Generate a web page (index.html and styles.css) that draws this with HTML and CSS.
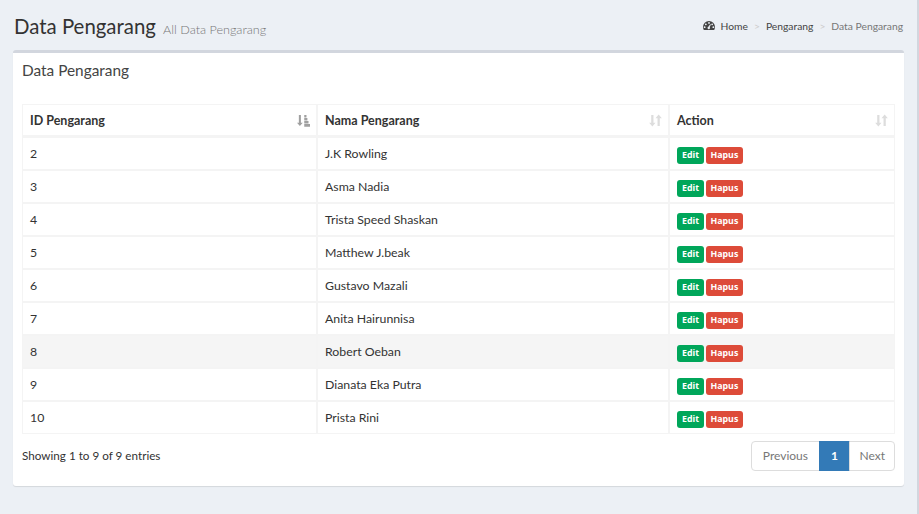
FILE: index.html
```html
<!DOCTYPE html>
<html lang="id">
  <head>
    <meta charset="UTF-8" />
    <meta name="viewport" content="width=device-width, initial-scale=1.0" />
    <title>Data Pengarang</title>
    <link rel="stylesheet" href="styles.css">
  </head>
  <body>
    <div class="content-wrapper">
      <header class="content-header">
        <h1>Data Pengarang <small>All Data Pengarang</small></h1>
        <ol class="breadcrumb">
          <li>
            <svg class="icon-dashboard" viewBox="0 0 16 12" aria-hidden="true">
              <path fill-rule="evenodd" d="M8 0a8 8 0 0 1 8 8c0 1.500-.4 2.800-1.100 4H1.100A8 8 0 0 1 0 8a8 8 0 0 1 8-8zM8 1.400a1.200 1.200 0 1 0 0 2.400 1.200 1.200 0 0 0 0-2.400zM3.800 3.200a1.200 1.200 0 1 0 0 2.400 1.200 1.200 0 0 0 0-2.400zM12.200 3.200a1.200 1.200 0 1 0 0 2.400 1.200 1.200 0 0 0 0-2.400zM2.200 7a1.200 1.200 0 1 0 0 2.400 1.200 1.200 0 0 0 0-2.400zM13.800 7a1.200 1.200 0 1 0 0 2.400 1.200 1.200 0 0 0 0-2.400zM9.600 4.200 7.100 7.600a1.700 1.700 0 1 0 1.900.5l1.600-3.500z"/>
            </svg>
            <a href="#">Home</a>
          </li>
          <li><a href="#">Pengarang</a></li>
          <li class="active">Data Pengarang</li>
        </ol>
      </header>

      <section class="box">
        <h3 class="box-title">Data Pengarang</h3>

        <table class="data-table">
          <thead>
            <tr>
              <th class="col-id">
                <div class="th-inner">ID Pengarang
                  <svg class="sort-icon sort-active" viewBox="0 0 14 14" aria-hidden="true">
                    <path d="M2 1h2.200v8.300H6.200L3.100 13 0 9.300h2zM7.800 1h2.400v2.700H7.800zM7.800 4.300h3.400V7H7.800zM7.800 7.600h4.600v2.700H7.800zM7.800 10.900H14v2.700H7.800z"/>
                  </svg>
                </div>
              </th>
              <th class="col-name">
                <div class="th-inner">Nama Pengarang
                  <svg class="sort-icon" viewBox="0 0 14 14" aria-hidden="true">
                    <path d="M2.400 1h2.400v8.400H7L3.600 13.500.2 9.400h2.200zM10.400 .5l3.400 4.100h-2.200V13H9.200V4.600H7z"/>
                  </svg>
                </div>
              </th>
              <th class="col-action">
                <div class="th-inner">Action
                  <svg class="sort-icon" viewBox="0 0 14 14" aria-hidden="true">
                    <path d="M2.400 1h2.400v8.400H7L3.600 13.500.2 9.400h2.200zM10.400 .5l3.400 4.100h-2.200V13H9.200V4.600H7z"/>
                  </svg>
                </div>
              </th>
            </tr>
          </thead>
          <tbody>
            <tr><td>2</td><td>J.K Rowling</td><td><div class="actions"><a class="btn btn-edit" href="#">Edit</a><a class="btn btn-hapus" href="#">Hapus</a></div></td></tr>
            <tr><td>3</td><td>Asma Nadia</td><td><div class="actions"><a class="btn btn-edit" href="#">Edit</a><a class="btn btn-hapus" href="#">Hapus</a></div></td></tr>
            <tr><td>4</td><td>Trista Speed Shaskan</td><td><div class="actions"><a class="btn btn-edit" href="#">Edit</a><a class="btn btn-hapus" href="#">Hapus</a></div></td></tr>
            <tr><td>5</td><td>Matthew J.beak</td><td><div class="actions"><a class="btn btn-edit" href="#">Edit</a><a class="btn btn-hapus" href="#">Hapus</a></div></td></tr>
            <tr><td>6</td><td>Gustavo Mazali</td><td><div class="actions"><a class="btn btn-edit" href="#">Edit</a><a class="btn btn-hapus" href="#">Hapus</a></div></td></tr>
            <tr><td>7</td><td>Anita Hairunnisa</td><td><div class="actions"><a class="btn btn-edit" href="#">Edit</a><a class="btn btn-hapus" href="#">Hapus</a></div></td></tr>
            <tr class="row-hover"><td>8</td><td>Robert Oeban</td><td><div class="actions"><a class="btn btn-edit" href="#">Edit</a><a class="btn btn-hapus" href="#">Hapus</a></div></td></tr>
            <tr><td>9</td><td>Dianata Eka Putra</td><td><div class="actions"><a class="btn btn-edit" href="#">Edit</a><a class="btn btn-hapus" href="#">Hapus</a></div></td></tr>
            <tr><td>10</td><td>Prista Rini</td><td><div class="actions"><a class="btn btn-edit" href="#">Edit</a><a class="btn btn-hapus" href="#">Hapus</a></div></td></tr>
          </tbody>
        </table>

        <div class="table-footer">
          <div class="table-info">Showing 1 to 9 of 9 entries</div>
          <ul class="pagination">
            <li class="page-prev"><a href="#">Previous</a></li>
            <li class="active"><a href="#">1</a></li>
            <li class="page-next"><a href="#">Next</a></li>
          </ul>
        </div>
      </section>
    </div>
  </body>
</html>
```

FILE: styles.css
```css
* {
  box-sizing: border-box;
}

html,
body {
  height: 100%;
}

body {
  margin: 0;
  background-color: #ecf0f5;
  color: #333333;
  font-family: "Lato", sans-serif;
  font-size: 12.3px;
  overflow: hidden;
}

a {
  text-decoration: none;
  color: inherit;
}

.content-wrapper {
  height: 100%;
  padding-right: 2px;
  border-right: 2px solid #d2d6de;
}

.content-header {
  display: flex;
  justify-content: space-between;
  align-items: center;
  height: 50px;
  padding: 2px 12px 0 14px;
}

.content-header h1 {
  margin: 0;
  font-size: 20.4px;
  font-weight: 400;
  color: #333333;
}

.content-header small {
  margin-left: 2px;
  font-size: 12.6px;
  font-weight: 300;
  color: #777777;
}

.breadcrumb {
  display: flex;
  align-items: center;
  margin: 0;
  padding: 0;
  list-style: none;
  font-size: 10.3px;
  color: #444444;
}

.breadcrumb li + li::before {
  content: ">";
  padding: 0 6px;
  color: #cccccc;
}

.breadcrumb .active {
  color: #777777;
}

.icon-dashboard {
  width: 12px;
  height: 9px;
  margin-right: 3px;
  fill: #444444;
}

.box {
  margin: 0 11px 0 13px;
  height: 436px;
  padding: 0 9px;
  background: #ffffff;
  border-top: 3px solid #d2d6de;
  border-radius: 3px;
  box-shadow: 0 1px 1px rgba(0, 0, 0, 0.1);
}

.box-title {
  margin: 0;
  padding-top: 8px;
  height: 51px;
  font-size: 15.4px;
  font-weight: 400;
  color: #444444;
}

.data-table {
  width: 873px;
  border-collapse: separate;
  border-spacing: 0;
  table-layout: fixed;
}

.data-table th,
.data-table td {
  border: 1px solid #f4f4f4;
  padding: 0 7px;
  text-align: left;
}

.data-table th {
  height: 33px;
  border-bottom-width: 2px;
  font-size: 12.5px;
  font-weight: 700;
}

.data-table td {
  height: 33px;
}

.col-id {
  width: 295px;
}

.col-name {
  width: 352px;
}

.th-inner {
  display: flex;
  justify-content: space-between;
  align-items: center;
}

.sort-icon {
  width: 13px;
  height: 13px;
  margin-right: -1px;
  fill: #dddddd;
}

.sort-active {
  fill: #a0a0a0;
}

.row-hover td {
  background-color: #f5f5f5;
}

.actions {
  display: flex;
  gap: 2px;
  padding-top: 4px;
}

.btn {
  display: block;
  padding: 0 5px;
  line-height: 17px;
  border-radius: 3px;
  color: #ffffff;
  font-family: "Open Sans", sans-serif;
  font-size: 8.8px;
  font-weight: 700;
}

.btn-edit {
  background-color: #00a65a;
}

.btn-hapus {
  padding: 0 4.500px;
  background-color: #dd4b39;
}

.table-footer {
  display: flex;
  justify-content: space-between;
  align-items: center;
  margin-top: 7px;
}

.table-info {
  padding-bottom: 2px;
  font-size: 11.7px;
}

.pagination {
  display: flex;
  margin: 0;
  padding: 0;
  list-style: none;
  font-size: 12px;
}

.pagination a {
  display: block;
  height: 30px;
  padding: 0 10.500px;
  line-height: 28px;
  border: 1px solid #dddddd;
  margin-left: -1px;
  color: #777777;
}

.pagination .page-next a {
  padding: 0 9px;
  border-radius: 0 4px 4px 0;
}

.pagination .page-prev a {
  border-radius: 4px 0 0 4px;
}

.pagination .active a {
  padding: 0 11.500px;
  background-color: #337ab7;
  border-color: #337ab7;
  color: #ffffff;
  font-weight: 700;
}
```
